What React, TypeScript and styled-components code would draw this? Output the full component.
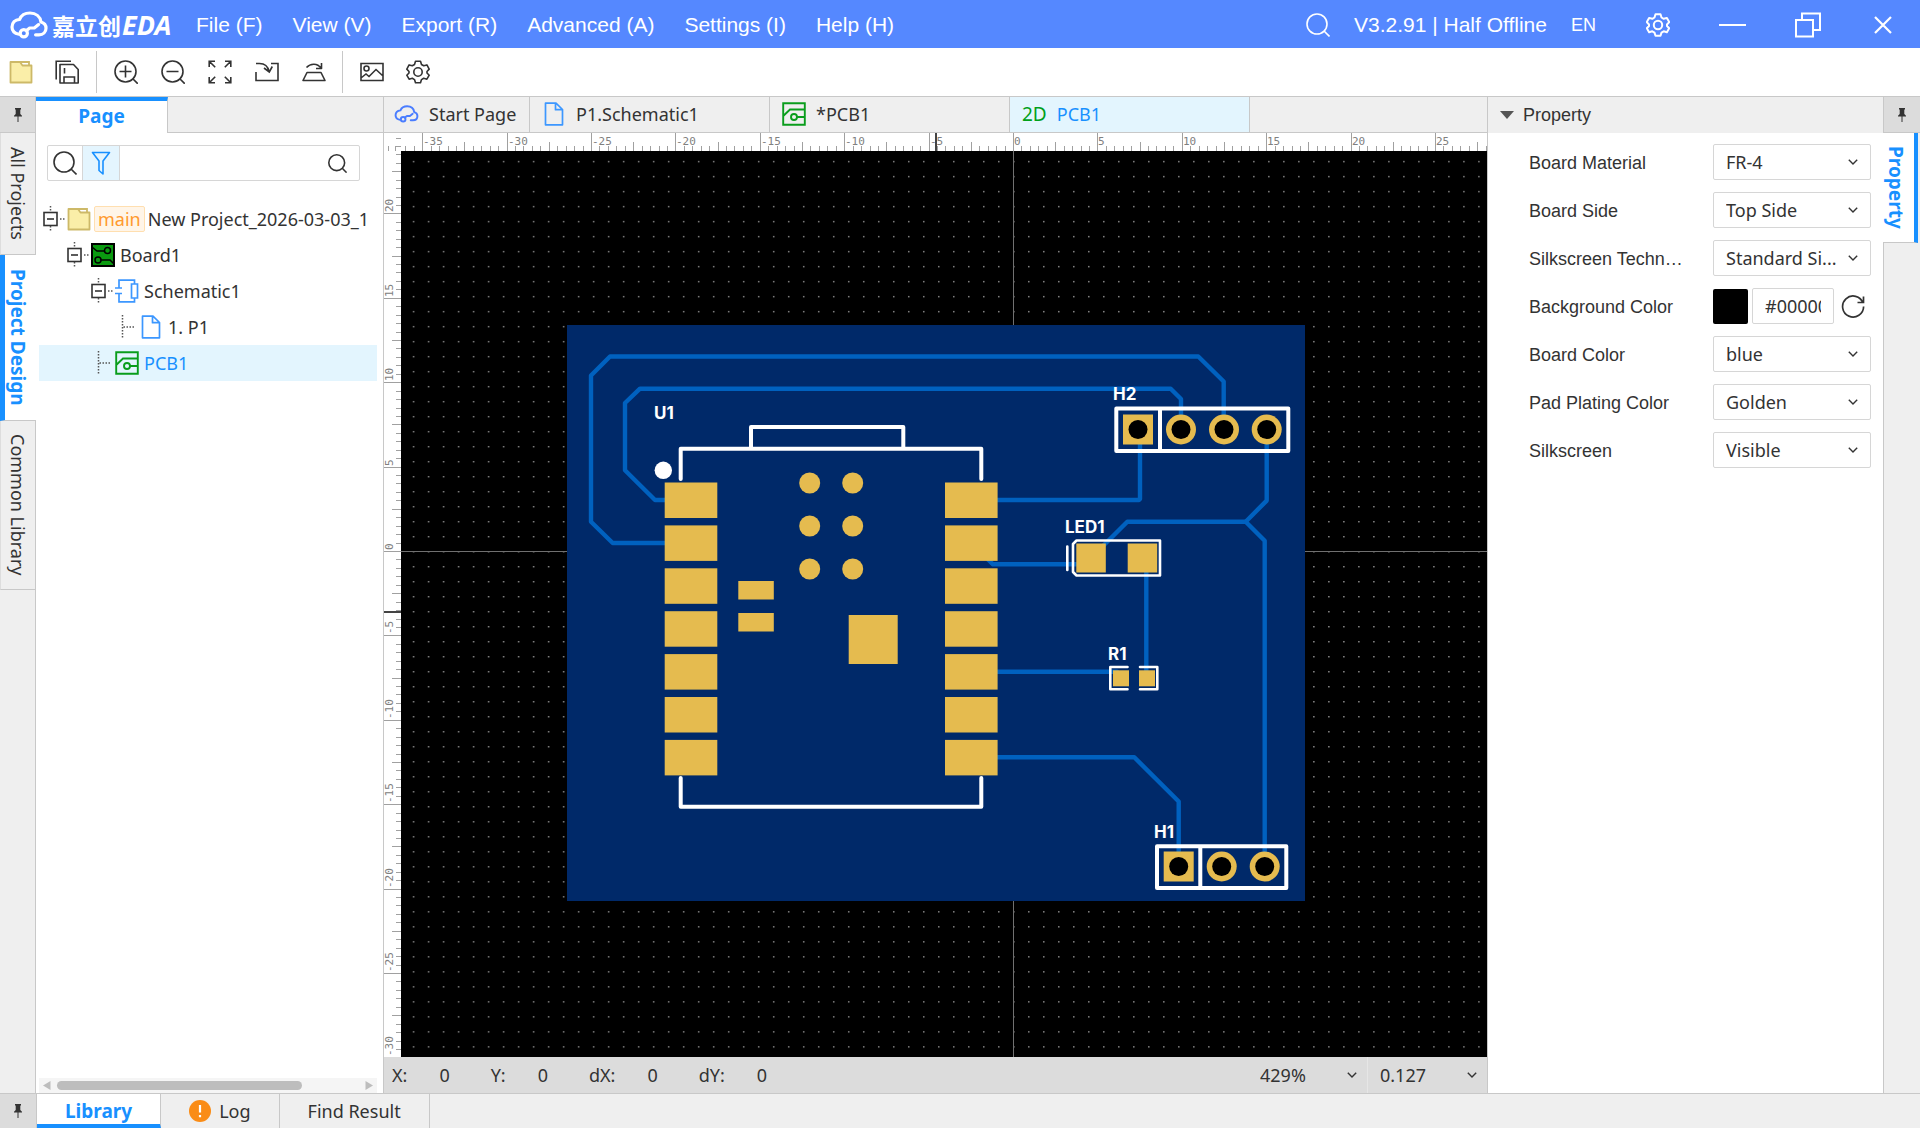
import React from "react";
import styled, { createGlobalStyle, css } from "styled-components";

const UI = '"Noto Sans", "Open Sans", "Noto Sans CJK SC", sans-serif';
const ARIAL = '"Liberation Sans", Arial, sans-serif';
const BLUE = "#1890ff";
const LINE = "#c8c8c8";
const BAR = "#efefef";

const GlobalStyle = createGlobalStyle`
  *, *::before, *::after { box-sizing: border-box; }
  body { margin: 0; background: #fff; color: #333; font: 18px/24px ${UI}; }
  button, input, select { font: inherit; color: inherit; margin: 0; padding: 0; border: 0; background: none; border-radius: 0; }
  ul { list-style: none; margin: 0; padding: 0; }
  svg { display: block; flex: none; }
  a { color: inherit; text-decoration: none; }
`;

/* ---------- shell ---------- */

const Shell = styled.div`
  display: grid;
  grid-template-rows: 48px 49px minmax(0, 1fr) 35px;
  height: 100vh;
`;

const Body = styled.div`
  display: grid;
  grid-template-columns: 36px 348px minmax(0, 1fr) 396px 37px;
  min-height: 0;
`;

/* ---------- top bar ---------- */

const TopBar = styled.header`
  display: flex;
  align-items: center;
  padding-top: 1px;
  background: #5588ff;
  color: #fff;
  font: 21px/24px ${ARIAL};
`;

const Brand = styled.a`
  display: flex;
  align-items: center;
  gap: 4px;
  width: 196px;
  padding-left: 10px;
  font-weight: 700;
`;

const BrandName = styled.span`
  display: flex;
  align-items: center;
  font: 700 23px/32px "Noto Sans CJK SC", sans-serif;
  white-space: nowrap;
`;

const BrandLatin = styled.span`
  padding-left: 1px;
  font: italic 700 27px/32px ${UI};
`;

const Menu = styled.nav`
  display: flex;
  gap: 30px;
  flex: 1;
`;

const PlainButton = styled.button`
  display: flex;
  align-items: center;
  justify-content: center;
  white-space: nowrap;
  cursor: pointer;
`;

const TopInfo = styled.div`
  display: flex;
  align-items: center;
  gap: 24px;
  padding-right: 24px;
`;

const LangButton = styled(PlainButton)`
  font-size: 18px;
`;

const WindowButton = styled(PlainButton)`
  width: 75px;
  height: 47px;
`;

/* ---------- tool bar ---------- */

const ToolBar = styled.div`
  display: flex;
  align-items: center;
  border-bottom: 1px solid ${LINE};
`;

const ToolGroup = styled.div`
  display: flex;
  align-items: center;
  gap: 22px;
  height: 42px;
  padding: 0 17px;
  & + & { border-left: 1px solid ${LINE}; }
  &:first-child { padding-left: 9px; }
  &:nth-child(2) { gap: 23px; padding-right: 16px; }
`;

/* ---------- side strips ---------- */

const Strip = styled.div<{ $right?: boolean }>`
  display: flex;
  flex-direction: column;
  background: ${BAR};
  border-${(p) => (p.$right ? "left" : "right")}: 1px solid ${LINE};
`;

const PinButton = styled(PlainButton)`
  width: 100%;
  height: 36px;
  background: #dcdcdc;
  border-bottom: 1px solid ${LINE};
`;

const SideTab = styled.button<{ $active?: boolean; $right?: boolean; $size: number }>`
  display: flex;
  align-items: center;
  justify-content: center;
  height: ${(p) => p.$size}px;
  writing-mode: vertical-rl;
  white-space: nowrap;
  border-left: 1px solid #ddd;
  border-bottom: 1px solid ${LINE};
  cursor: pointer;
  ${(p) =>
    p.$active &&
    css`
      margin-${p.$right ? "left" : "right"}: -1px;
      padding-right: 5px;
      background: #fff;
      color: ${BLUE};
      font-weight: 700;
      font-size: 19px;
      border-left: ${p.$right ? "0" : `5px solid ${BLUE}`};
      border-right: ${p.$right ? `4px solid ${BLUE}` : "0"};
      border-bottom-color: ${LINE};
    `}
  ${(p) => p.$right && css` margin-right: 2px; `}
`;

/* ---------- project panel ---------- */

const ProjectPanel = styled.aside`
  display: flex;
  flex-direction: column;
  min-width: 0;
  border-right: 1px solid ${LINE};
`;

const PanelTabs = styled.div`
  display: flex;
  height: 36px;
  background: ${BAR};
`;

const PanelTab = styled.button`
  width: 132px;
  padding-bottom: 2px;
  background: #fff;
  border-top: 4px solid ${BLUE};
  border-right: 1px solid ${LINE};
  color: ${BLUE};
  font-weight: 700;
  font-size: 19px;
  line-height: 24px;
`;

const PanelTabRest = styled.div`
  flex: 1;
  border-bottom: 1px solid ${LINE};
`;

const SearchBox = styled.form`
  display: flex;
  align-items: stretch;
  height: 36px;
  margin: 12px 23px 20px 11px;
  border: 1px solid #d6d6d6;
  border-radius: 2px;
`;

const SearchButton = styled(PlainButton)<{ $on?: boolean; $wide?: boolean }>`
  width: ${(p) => (p.$wide ? 44 : p.$on ? 37 : 35)}px;
  background: ${(p) => (p.$on ? "#e4f5fe" : "transparent")};
  border-right: ${(p) => (p.$wide ? "0" : "1px solid #d6d6d6")};
`;

const SearchInput = styled.input`
  flex: 1;
  min-width: 0;
  padding: 0 8px;
  outline: 0;
`;

const Tree = styled.ul`
  flex: 1;
  padding: 0 6px 0 3px;
  overflow: hidden;
`;

const TreeRow = styled.li<{ $level: number; $active?: boolean }>`
  display: flex;
  align-items: center;
  height: 36px;
  padding-left: ${(p) => p.$level * 24 + 4}px;
  white-space: nowrap;
  overflow: hidden;
  background: ${(p) => (p.$active ? "#e3f5fe" : "transparent")};
  color: ${(p) => (p.$active ? BLUE : "inherit")};
`;

const TreeLink = styled.a`
  display: flex;
  align-items: center;
  gap: 5px;
`;

const Tag = styled.span`
  padding: 0 3px;
  margin: 0 -2px;
  border: 1px solid #ffdfb0;
  border-radius: 2px;
  background: #fff5e8;
  color: #ff9a2e;
`;

const ScrollTrack = styled.div`
  display: flex;
  align-items: center;
  height: 15px;
  margin: 0 6px 0 3px;
  padding: 0 4px;
  gap: 6px;
  background: #f5f5f5;
`;

const ScrollLane = styled.div`
  flex: 1;
`;

const ScrollThumb = styled.div`
  width: 81%;
  height: 9px;
  border-radius: 5px;
  background: #bdbdbd;
`;

/* ---------- editor ---------- */

const Editor = styled.main`
  display: grid;
  grid-template-rows: 36px minmax(0, 1fr) 36px;
  min-width: 0;
`;

const DocTabs = styled.div`
  display: flex;
  background: ${BAR};
  border-bottom: 1px solid ${LINE};
  overflow: hidden;
`;

const DocTab = styled.button<{ $width: number; $gap: number; $pad: number; $active?: boolean }>`
  display: flex;
  align-items: center;
  width: ${(p) => p.$width}px;
  gap: ${(p) => p.$gap}px;
  padding-left: ${(p) => p.$pad}px;
  padding-bottom: 2px;
  border-right: 1px solid ${LINE};
  background: ${(p) => (p.$active ? "#e3f5fe" : "transparent")};
  color: ${(p) => (p.$active ? BLUE : "inherit")};
  white-space: nowrap;
`;

const TwoD = styled.span`
  color: #00a01a;
  font-size: 19px;
`;

const Stage = styled.div`
  display: grid;
  grid-template-columns: 17px minmax(0, 1fr);
  grid-template-rows: 18px minmax(0, 1fr);
  min-height: 0;
`;

const Drawing = styled.svg`
  width: 100%;
  height: 100%;
  min-width: 0;
  min-height: 0;
  overflow: hidden;
`;

const CanvasSvg = styled(Drawing)`
  background: #000;
`;

const StatusBar = styled.footer`
  display: flex;
  align-items: center;
  justify-content: space-between;
  background: #dcdcdc;
`;

const Coords = styled.dl`
  display: flex;
  gap: 41px;
  margin: 0;
  padding-left: 8px;
`;

const Coord = styled.div`
  display: flex;
  gap: 32px;
  dd { margin: 0; }
`;

const StatusSelects = styled.div`
  display: flex;
  height: 36px;
`;

/* ---------- select ---------- */

const SelectBox = styled.div<{ $flat?: boolean }>`
  display: grid;
  grid-template-columns: minmax(0, 1fr);
  align-items: center;
  width: ${(p) => (p.$flat ? "120px" : "158px")};
  height: 36px;
  border: ${(p) => (p.$flat ? "0" : "1px solid #d6d6d6")};
  border-left: ${(p) => (p.$flat ? "1px solid #e6e6e6" : "1px solid #d6d6d6")};
  border-radius: ${(p) => (p.$flat ? 0 : 2)}px;
  &:first-child { border-left-color: ${(p) => (p.$flat ? "transparent" : "#d6d6d6")}; }
  select, svg { grid-area: 1 / 1; }
  select {
    appearance: none;
    width: 100%;
    height: 34px;
    padding: 0 30px 0 12px;
    outline: 0;
  }
  svg { justify-self: end; margin-right: ${(p) => (p.$flat ? 10 : 12)}px; pointer-events: none; }
`;

/* ---------- property panel ---------- */

const PropertyPanel = styled.aside`
  border-left: 1px solid ${LINE};
  min-width: 0;
`;

const PropertyHead = styled.button`
  display: flex;
  align-items: center;
  gap: 9px;
  width: 100%;
  height: 36px;
  padding-left: 12px;
  background: ${BAR};
  font: 18px/24px ${ARIAL};
`;

const PropertyList = styled.div`
  display: grid;
  gap: 12px;
  padding: 11px 12px 0 41px;
`;

const PropertyRow = styled.div`
  display: flex;
  align-items: center;
  justify-content: space-between;
  label { padding-top: 2px; font: 18px/24px ${ARIAL}; white-space: nowrap; }
`;

const ColorField = styled.div`
  display: flex;
  align-items: center;
  gap: 4px;
  width: 158px;
`;

const Swatch = styled.button`
  width: 35px;
  height: 35px;
  background: #000;
  border-radius: 2px;
`;

const HexInput = styled.input`
  width: 82px;
  height: 36px;
  padding: 0 12px;
  border: 1px solid #d6d6d6;
  border-radius: 2px;
  outline: 0;
`;

const ResetButton = styled(PlainButton)`
  width: 30px;
  height: 36px;
`;

/* ---------- bottom bar ---------- */

const BottomBar = styled.footer`
  display: flex;
  background: ${BAR};
  border-top: 1px solid ${LINE};
`;

const BottomPin = styled(PlainButton)`
  width: 37px;
  background: #dcdcdc;
  border-right: 1px solid ${LINE};
`;

const BottomTab = styled.button<{ $active?: boolean }>`
  display: flex;
  align-items: center;
  gap: 8px;
  padding: 0 28px;
  border-right: 1px solid ${LINE};
  ${(p) =>
    p.$active &&
    css`
      padding-top: 4px;
      background: #fff;
      color: ${BLUE};
      font-weight: 700;
      font-size: 19px;
      border-bottom: 4px solid ${BLUE};
    `}
`;

/* ---------- icons ---------- */

type IconProps = { w?: number; h?: number; box?: string; c?: string; sw?: number; children: React.ReactNode };
const Icon = ({ w = 24, h = 24, box, c = "#333", sw = 1.6, children }: IconProps) => (
  <svg width={w} height={h} viewBox={box ?? `0 0 ${w} ${h}`} fill="none" stroke={c} strokeWidth={sw} aria-hidden="true">
    {children}
  </svg>
);

const CloudIcon = ({ w, h, c, sw }: { w: number; h: number; c: string; sw: number }) => (
  <Icon w={w} h={h} box="0 0 38 28" c={c} sw={sw}>
    <path
      d="M9 23.200C4.600 22.400 2 19.600 2 16c0-4.300 3-7.300 7.600-7.700C11.200 4.400 15.200 2 20 2c5.800 0 10.200 3.600 11 9 3.200.900 5 3.300 5 6.200 0 3.800-2.800 6.600-7 6.600h-3.400"
      strokeLinecap="round"
    />
    <circle cx="13.800" cy="22.200" r="3.600" />
    <path d="M16.500 19.600l3.200-2.600h4.600l4.300-3.400" strokeLinecap="round" strokeLinejoin="round" />
  </Icon>
);

const FolderIcon = () => (
  <Icon c="#cdb968" sw={1.8}>
    <path d="M1.500 2h9.500l2.500 3.500h9V22.500h-21z" fill="#faeea8" strokeLinejoin="round" />
    <path d="M11 2h9v3.500" />
  </Icon>
);

const SaveIcon = () => (
  <Icon>
    <path d="M1.200 19.500V1.200H16" />
    <path d="M5 4.500h13.500l4.700 5V23H5z" strokeLinejoin="round" />
    <path d="M9 23v-6h10.500v6M9.500 8v5.500" />
  </Icon>
);

const ZoomIcon = ({ plus }: { plus?: boolean }) => (
  <Icon>
    <circle cx="11.500" cy="11.500" r="10.500" />
    <path d="M18.800 18.800l5 5M5.500 11.500h12" />
    {plus && <path d="M11.500 5.500v12" />}
  </Icon>
);

const FitIcon = () => (
  <Icon>
    <path d="M7 1.200H1.200V7M1.200 1.200l6 6M17 1.200h5.800V7M22.800 1.200l-6 6M7 22.800H1.200V17M1.200 22.800l6-6M17 22.800h5.800V17M22.800 22.800l-6-6" />
  </Icon>
);

const ImportIcon = () => (
  <Icon>
    <path d="M1 12v8.500h22V3.500h-7M1 3.500h3.500c5 0 8.500 3 9.500 8M9 8l5.300 4 3-5.500" />
  </Icon>
);

const FlipIcon = () => (
  <Icon>
    <path d="M5 12.500h14l4 8H1zM4.500 7.500c4-4.500 11-4.500 14.500.500M19.500 3v5.500H14" strokeLinejoin="round" />
  </Icon>
);

const ImageIcon = () => (
  <Icon>
    <path d="M1 3.500h22v17H1zM1 18l5-4 3 2.500 7-7 7 6.500" />
    <circle cx="6.500" cy="8.500" r="2.500" />
  </Icon>
);

const GearIcon = ({ c = "#333", sw = 1.6 }: { c?: string; sw?: number }) => (
  <Icon c={c} sw={sw}>
    <path
      d="M9.500 1.200h5l1 3.300 2.200 1.300 3.200-.900 2.300 4.200-2.200 2.400v1.500l2.200 2.200-2.300 4-3.200-.900-2.200 1.300-1 3.200h-5l-1-3.200-2.200-1.300-3.200.900-2.300-4 2.200-2.200v-1.500L.800 9.100l2.300-4.200 3.200.900 2.200-1.300z"
      strokeLinejoin="round"
    />
    <circle cx="12" cy="12" r="4.200" />
  </Icon>
);

const SearchIcon = ({ size = 24, c = "#333", sw = 1.6 }: { size?: number; c?: string; sw?: number }) => (
  <Icon w={size} h={size} box="0 0 24 24" c={c} sw={sw}>
    <circle cx="11" cy="11" r="10" />
    <path d="M18 18l5.500 5.500" />
  </Icon>
);

const FilterIcon = () => (
  <Icon w={20} h={24} c={BLUE}>
    <path d="M1.500 1.500h17L12 10v13l-4-3.500V10z" strokeLinejoin="round" />
  </Icon>
);

const PinIcon = () => (
  <svg width="8" height="14" viewBox="0 0 8 14" fill="#333" aria-hidden="true">
    <path d="M1 0h6v1.500H6.300V6L8 7.800V8.500H4.500V14h-1V8.500H0V7.800L1.700 6V1.500H1z" />
  </svg>
);

const DocIcon = () => (
  <Icon box="-2.500 0 24 24" c="#3c97ff" sw={1.7}>
    <path d="M1 1.200h10.500L18 7.500v15.300H1zM11 1.200v6.500h7" strokeLinejoin="round" />
  </Icon>
);

const PcbIcon = () => (
  <Icon c="#0a9d1c" sw={1.9}>
    <path d="M1.200 1.200h21.600v21.600H1.200zM1.200 14L8 7.500h14.800M15 15h7.800" />
    <circle cx="12" cy="15" r="3" />
  </Icon>
);

const BoardIcon = () => (
  <Icon c="#000" sw={1.5}>
    <path d="M1 1h22v22H1z" fill="#0a9a10" strokeWidth="2" />
    <path d="M1 4l5 4h7M10 17h9l4 4" />
    <circle cx="16.500" cy="7.500" r="3" />
    <circle cx="7" cy="17" r="3" />
  </Icon>
);

const SchematicIcon = () => (
  <Icon c="#3c97ff" sw={1.7}>
    <path d="M0 9h7M0 14.500h7M4 9V1.200h15.500V5M4 14.500v8.300h15.500V19M16.500 5h6v14h-6z" />
  </Icon>
);

const Expander = () => (
  <Icon w={24} h={36}>
    <path d="M7.500 5v6M7.500 25v6M17 18h5" stroke="#555" strokeDasharray="1.500 1.500" strokeWidth="1.500" />
    <rect x="1" y="11.500" width="13" height="13" />
    <path d="M4 18h7" />
  </Icon>
);

const Branch = () => (
  <Icon w={24} h={36}>
    <path d="M7.500 6v24M8.500 18h12" stroke="#555" strokeDasharray="1.500 1.500" strokeWidth="1.500" />
  </Icon>
);

const Chevron = () => (
  <Icon w={10} h={6} sw={1.4}>
    <path d="M.800.800L5 5l4.200-4.200" />
  </Icon>
);

const Arrow = ({ left }: { left?: boolean }) => (
  <svg width="8" height="9" viewBox="0 0 8 9" fill="#bdbdbd" aria-hidden="true">
    <path d={left ? "M7.500 0v9L0 4.500z" : "M.500 0v9L8 4.500z"} />
  </svg>
);

/* ---------- canvas drawing ---------- */

const ORIGIN = { x: 612, y: 400 };
const HALF_UNIT = 8.44;
const GRID = 15.006;
const MONO = '"DejaVu Sans Mono", monospace';

const rulerSteps = (from: number, to: number) =>
  Array.from({ length: to - from + 1 }, (_, i) => from + i);

const TopRuler = () => (
  <Drawing aria-label="Horizontal ruler">
    {rulerSteps(-72, 56).map((n) => {
      const x = Math.round(ORIGIN.x + n * HALF_UNIT);
      const major = n % 10 === 0;
      return (
        <g key={n}>
          <line x1={x + 0.5} x2={x + 0.5} y1={major ? 0 : n % 5 === 0 ? 9 : 13} y2={18} stroke="#a0a0a0" />
          {major && (
            <text x={x + 1} y={12} fontFamily={MONO} fontSize={11} fill="#808080">
              {n / 2}
            </text>
          )}
        </g>
      );
    })}
    <line x1={535} x2={535} y1={0} y2={18} stroke="#444" strokeWidth={2} />
  </Drawing>
);

const LeftRuler = () => (
  <Drawing aria-label="Vertical ruler">
    {rulerSteps(-47, 60).map((n) => {
      const y = Math.round(ORIGIN.y + n * HALF_UNIT);
      const major = n % 10 === 0;
      return (
        <g key={n}>
          <line y1={y + 0.5} y2={y + 0.5} x1={major ? 0 : n % 5 === 0 ? 8 : 12} x2={17} stroke="#a0a0a0" />
          {major && (
            <text transform={`translate(9 ${y - 1}) rotate(-90)`} fontFamily={MONO} fontSize={11} fill="#808080">
              {-n / 2 || 0}
            </text>
          )}
        </g>
      );
    })}
    <line x1={0} x2={17} y1={461} y2={461} stroke="#444" strokeWidth={2} />
  </Drawing>
);

const Corner = () => (
  <Drawing aria-hidden="true">
    <path d="M4.500 13v5M11.500 13v5M12 5.500h5M12 13.500h5" stroke="#a0a0a0" />
  </Drawing>
);

const PAD = "#e5bb4f";
const padRows = [0, 1, 2, 3, 4, 5, 6];

const Hole = ({ x, y, square }: { x: number; y: number; square?: boolean }) => (
  <g>
    {square ? <rect x={x - 15} y={y - 15} width={30} height={30} fill={PAD} /> : <circle cx={x} cy={y} r={15} fill={PAD} />}
    <circle cx={x} cy={y} r={9.5} fill="#000" />
  </g>
);

const Board = () => (
  <g transform="translate(166 174)">
    <rect width={738} height={576} fill="#002969" />
    <g fill="none" stroke="#0061bf" strokeWidth={4.4} strokeLinejoin="round" strokeLinecap="round">
      <path d="M98 218H45.700L24 196.700V50.500L43 31.500H631.300L656.700 56.500V105" />
      <path d="M98 175H88L58 145.300V78L73 63.700H603.700L614 74V105" />
      <path d="M430 175H572L573 174V105" />
      <path d="M699.700 105V175.600L678.700 196.700H560.300L536 221" />
      <path d="M678.700 196.700L697.700 215.800V541" />
      <path d="M430 432.300H567.300L611.700 476.500V541" />
      <path d="M430 346.700H550" />
      <path d="M421 234.500L426 239.300H515" />
      <path d="M579.300 235V352" />
    </g>
    <g fill="none" stroke="#fff" strokeWidth={4} strokeLinejoin="round" strokeLinecap="round">
      <path d="M113.700 154V123.700H414.300V154M184 123.700V102H336.300V123.700M113.700 453V481.700H414.300V453" />
      <path d="M549.300 83.500H721.300V126H549.300zM593 83.500V126" />
      <path d="M590 521.300H719.300V563H590zM633.300 521.300V563" />
      <path d="M509.500 215.500H593V250.500H509.500L506 247V219zM500.300 221.500V245" strokeWidth={2.6} />
      <path d="M560.500 342H543.300V364.300H560.500M573 342H590.300V364.300H573" strokeWidth={2.6} />
    </g>
    <circle cx={96.300} cy={145.300} r={8.700} fill="#fff" />
    <g fill={PAD}>
      {padRows.map((i) => (
        <React.Fragment key={i}>
          <rect x={97.700} y={157.500 + i * 42.900} width={52.600} height={35.500} />
          <rect x={378} y={157.500 + i * 42.900} width={52.600} height={35.500} />
        </React.Fragment>
      ))}
      {[158, 201, 244].map((y) => (
        <React.Fragment key={y}>
          <circle cx={242.700} cy={y} r={10.500} />
          <circle cx={285.700} cy={y} r={10.500} />
        </React.Fragment>
      ))}
      <rect x={171.300} y={256} width={35.500} height={18.500} />
      <rect x={171.300} y={288} width={35.500} height={18.500} />
      <rect x={281.700} y={290} width={49} height={49} />
      <rect x={509.300} y={218.500} width={29.500} height={29} />
      <rect x={560.700} y={218.500} width={29.500} height={29} />
      <rect x={546} y={345.300} width={16} height={16} />
      <rect x={572} y={345.300} width={16} height={16} />
    </g>
    <Hole x={571} y={104.500} square />
    <Hole x={614} y={104.500} />
    <Hole x={657} y={104.500} />
    <Hole x={699.700} y={104.500} />
    <Hole x={611.700} y={541.500} square />
    <Hole x={654.700} y={541.500} />
    <Hole x={697.700} y={541.500} />
    <g fill="#fff" fontFamily="Inter, sans-serif" fontWeight={700} fontSize={17}>
      <text x={87} y={94}>U1</text>
      <text x={546} y={75}>H2</text>
      <text x={498} y={208}>LED1</text>
      <text x={541} y={335}>R1</text>
      <text x={587} y={513}>H1</text>
    </g>
  </g>
);

const Canvas = () => (
  <CanvasSvg role="img" aria-label="2D board preview">
    <defs>
      <pattern id="dots" x={ORIGIN.x} y={ORIGIN.y} width={GRID} height={GRID} patternUnits="userSpaceOnUse">
        <rect width={1.5} height={1.4} fill="#8c8c8c" />
      </pattern>
    </defs>
    <rect width="100%" height="100%" fill="url(#dots)" />
    <line x1={ORIGIN.x + 0.5} x2={ORIGIN.x + 0.5} y1={0} y2="100%" stroke="#707070" />
    <line y1={ORIGIN.y + 0.5} y2={ORIGIN.y + 0.5} x1={0} x2="100%" stroke="#707070" />
    <Board />
  </CanvasSvg>
);

/* ---------- data ---------- */

const menus = ["File (F)", "View (V)", "Export (R)", "Advanced (A)", "Settings (I)", "Help (H)"];

const fields = [
  { id: "material", label: "Board Material", value: "FR-4" },
  { id: "side", label: "Board Side", value: "Top Side" },
  { id: "tech", label: "Silkscreen Techn…", value: "Standard Si..." },
  { id: "background", label: "Background Color", value: "#000000", color: true },
  { id: "board", label: "Board Color", value: "blue" },
  { id: "plating", label: "Pad Plating Color", value: "Golden" },
  { id: "silk", label: "Silkscreen", value: "Visible" },
];

const Select = ({ id, value, flat, label }: { id: string; value: string; flat?: boolean; label?: string }) => (
  <SelectBox $flat={flat}>
    <select id={id} aria-label={label} defaultValue={value}>
      <option>{value}</option>
    </select>
    <Chevron />
  </SelectBox>
);

const tools: { label: string; icon: React.ReactNode }[][] = [
  [
    { label: "Open", icon: <FolderIcon /> },
    { label: "Save all", icon: <SaveIcon /> },
  ],
  [
    { label: "Zoom in", icon: <ZoomIcon plus /> },
    { label: "Zoom out", icon: <ZoomIcon /> },
    { label: "Fit", icon: <FitIcon /> },
    { label: "Import", icon: <ImportIcon /> },
    { label: "Flip board", icon: <FlipIcon /> },
  ],
  [
    { label: "Image", icon: <ImageIcon /> },
    { label: "Preferences", icon: <GearIcon /> },
  ],
];

export default function App() {
  return (
    <>
      <GlobalStyle />
      <Shell>
        <TopBar>
          <Brand href="#home">
            <CloudIcon w={38} h={28} c="#fff" sw={3.2} />
            <BrandName>
              嘉立创<BrandLatin>EDA</BrandLatin>
            </BrandName>
          </Brand>
          <Menu>
            {menus.map((m) => (
              <PlainButton key={m}>{m}</PlainButton>
            ))}
          </Menu>
          <TopInfo>
            <PlainButton aria-label="Search">
              <SearchIcon c="#fff" />
            </PlainButton>
            <span>V3.2.91 | Half Offline</span>
            <LangButton>EN</LangButton>
          </TopInfo>
          <WindowButton aria-label="Settings">
            <GearIcon c="#fff" sw={2} />
          </WindowButton>
          <WindowButton aria-label="Minimize">
            <Icon w={27} h={4} c="#fff" sw={2}>
              <path d="M0 2h27" />
            </Icon>
          </WindowButton>
          <WindowButton aria-label="Restore">
            <Icon w={26} h={26} c="#fff" sw={2}>
              <path d="M1 8h17v16.500H1zM7 8V1.500h18V18h-7" />
            </Icon>
          </WindowButton>
          <WindowButton aria-label="Close">
            <Icon w={18} h={18} c="#fff" sw={2.2}>
              <path d="M1 1l16 16M17 1L1 17" />
            </Icon>
          </WindowButton>
        </TopBar>

        <ToolBar>
          {tools.map((group, i) => (
            <ToolGroup key={i}>
              {group.map((t) => (
                <PlainButton key={t.label} aria-label={t.label}>
                  {t.icon}
                </PlainButton>
              ))}
            </ToolGroup>
          ))}
        </ToolBar>

        <Body>
          <Strip>
            <PinButton aria-label="Pin left panel">
              <PinIcon />
            </PinButton>
            <SideTab $size={122}>All Projects</SideTab>
            <SideTab $size={166} $active>
              Project Design
            </SideTab>
            <SideTab $size={169}>Common Library</SideTab>
          </Strip>

          <ProjectPanel>
            <PanelTabs>
              <PanelTab>Page</PanelTab>
              <PanelTabRest />
            </PanelTabs>
            <SearchBox>
              <SearchButton type="button" aria-label="Find">
                <SearchIcon />
              </SearchButton>
              <SearchButton type="button" aria-label="Filter" $on>
                <FilterIcon />
              </SearchButton>
              <SearchInput aria-label="Filter pages" />
              <SearchButton type="button" aria-label="Run filter" $wide>
                <SearchIcon size={19} sw={2} />
              </SearchButton>
            </SearchBox>
            <Tree>
              <TreeRow $level={0}>
                <Expander />
                <TreeLink href="#project">
                  <FolderIcon />
                  <Tag>main</Tag>
                  <span>New Project_2026-03-03_1</span>
                </TreeLink>
              </TreeRow>
              <TreeRow $level={1}>
                <Expander />
                <TreeLink href="#board">
                  <BoardIcon />
                  Board1
                </TreeLink>
              </TreeRow>
              <TreeRow $level={2}>
                <Expander />
                <TreeLink href="#schematic">
                  <SchematicIcon />
                  Schematic1
                </TreeLink>
              </TreeRow>
              <TreeRow $level={3}>
                <Branch />
                <TreeLink href="#p1">
                  <DocIcon />
                  1. P1
                </TreeLink>
              </TreeRow>
              <TreeRow $level={2} $active>
                <Branch />
                <TreeLink href="#pcb">
                  <PcbIcon />
                  PCB1
                </TreeLink>
              </TreeRow>
            </Tree>
            <ScrollTrack>
              <Arrow left />
              <ScrollLane>
                <ScrollThumb />
              </ScrollLane>
              <Arrow />
            </ScrollTrack>
          </ProjectPanel>

          <Editor>
            <DocTabs>
              <DocTab $width={146} $gap={10} $pad={10}>
                <CloudIcon w={25} h={18} c="#4a7dff" sw={3} />
                Start Page
              </DocTab>
              <DocTab $width={240} $gap={10} $pad={12}>
                <DocIcon />
                P1.Schematic1
              </DocTab>
              <DocTab $width={240} $gap={10} $pad={12}>
                <PcbIcon />
                *PCB1
              </DocTab>
              <DocTab $width={240} $gap={10} $pad={12} $active>
                <TwoD>2D</TwoD>
                PCB1
              </DocTab>
            </DocTabs>
            <Stage>
              <Corner />
              <TopRuler />
              <LeftRuler />
              <Canvas />
            </Stage>
            <StatusBar>
              <Coords>
                {["X:", "Y:", "dX:", "dY:"].map((k) => (
                  <Coord key={k}>
                    <dt>{k}</dt>
                    <dd>0</dd>
                  </Coord>
                ))}
              </Coords>
              <StatusSelects>
                <Select id="zoom" value="429%" label="Zoom" flat />
                <Select id="grid" value="0.127" label="Grid size" flat />
              </StatusSelects>
            </StatusBar>
          </Editor>

          <PropertyPanel>
            <PropertyHead>
              <svg width="14" height="8" viewBox="0 0 14 8" fill="#555" aria-hidden="true">
                <path d="M0 0h14L7 8z" />
              </svg>
              Property
            </PropertyHead>
            <PropertyList>
              {fields.map((f) => (
                <PropertyRow key={f.id}>
                  <label htmlFor={f.id}>{f.label}</label>
                  {f.color ? (
                    <ColorField>
                      <Swatch aria-label="Pick color" />
                      <HexInput id={f.id} defaultValue={f.value} />
                      <ResetButton aria-label="Reset color">
                        <Icon sw={1.7}>
                          <path d="M22 9A10.500 10.500 0 1 0 22.600 12.500M22.500 2.500V8.500H16.500" />
                        </Icon>
                      </ResetButton>
                    </ColorField>
                  ) : (
                    <Select id={f.id} value={f.value} />
                  )}
                </PropertyRow>
              ))}
            </PropertyList>
          </PropertyPanel>

          <Strip $right>
            <PinButton aria-label="Pin right panel">
              <PinIcon />
            </PinButton>
            <SideTab $size={110} $active $right>
              Property
            </SideTab>
          </Strip>
        </Body>

        <BottomBar>
          <BottomPin aria-label="Pin bottom panel">
            <PinIcon />
          </BottomPin>
          <BottomTab $active>Library</BottomTab>
          <BottomTab>
            <svg width="22" height="22" viewBox="0 0 22 22" aria-hidden="true">
              <circle cx="11" cy="11" r="11" fill="#fa8c16" />
              <path d="M11 5v7.500M11 15v2.200" stroke="#fff" strokeWidth="2.200" />
            </svg>
            Log
          </BottomTab>
          <BottomTab>Find Result</BottomTab>
        </BottomBar>
      </Shell>
    </>
  );
}
